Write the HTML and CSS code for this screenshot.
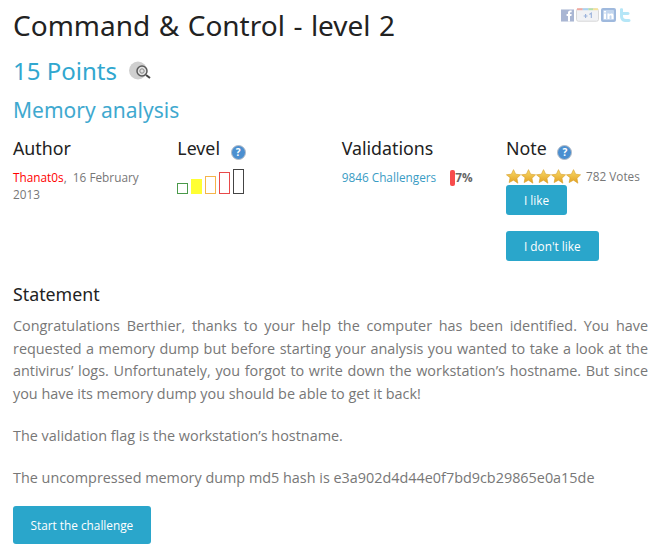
FILE: index.html
```html
<!doctype html>
<html lang="en">
    <head>
        <meta charset="utf-8" />
        <title>Command &amp; Control - level 2</title>
        <link rel="stylesheet" href="styles.css">
    </head>

    <body>
        <div class="wrap-container">
            <div class="titleRow">
                <h1>Command &amp; Control - level 2</h1>
                <div class="social">
                    <svg width="13" height="13" viewBox="0 0 14 13"><rect width="14" height="13" fill="#a9b6d3"/><path d="M7.500 13V7H6V5h1.500V3.500C7.500 2 8.500 1 10 1h1.500v2H10.500c-.5 0-.8.3-.8.8V5h1.800l-.3 2H9.700v6z" fill="#fff"/></svg>
                    <svg width="23" height="14" viewBox="0 0 24 14"><rect x=".5" y=".5" width="23" height="13" rx="2" fill="#f1f2f5" stroke="#d6d6d6"/><rect x="1" y="0" width="6" height="2" fill="#f2a9a0"/><rect x="7" y="0" width="6" height="2" fill="#a9d3f2"/><rect x="13" y="0" width="5" height="2" fill="#b5e0a8"/><rect x="18" y="0" width="5" height="2" fill="#f7e39a"/><path d="M8 8h4M10 6v4" stroke="#9db4dc" stroke-width="1.200"/><path d="M14 6.500l2-1.500v5" stroke="#9db4dc" stroke-width="1.200" fill="none"/></svg>
                    <svg width="15" height="14" viewBox="0 0 15 14"><rect width="15" height="14" rx="2" fill="#9fb9dd"/><rect x="2" y="2" width="11" height="10" rx="1" fill="#c3d6ee"/><rect x="3" y="5.500" width="2" height="5.500" fill="#fff"/><rect x="3" y="3" width="2" height="1.500" fill="#fff"/><path d="M6.500 11V5.500h2V6.500c1-1.500 4-1.500 4 1V11h-2V8c0-1-1.700-1-2 0v3z" fill="#fff"/></svg>
                    <svg class="tw" width="13" height="14" viewBox="0 0 13 14"><path d="M1 1c0-1 3-1 3 0v3h5c2 0 2 3 0 3H4v1c0 2 1 3 3 3h3c2 0 2 3 0 3H6C3 14 1 11 1 8z" fill="#b5e6f7"/></svg>
                </div>
            </div>

            <div class="pointsRow">
                <h2>15 Points</h2>
                <svg class="badge" width="22" height="22" viewBox="0 0 22 22">
                    <circle cx="9" cy="10.500" r="9" fill="#cfcfcf"/>
                    <circle cx="13" cy="11" r="5" fill="#e2e2e2" stroke="#5a5a5a" stroke-width="1.500"/>
                    <circle cx="13" cy="11" r="2.200" fill="none" stroke="#888"/>
                    <path d="M17 15l4 3" stroke="#444" stroke-width="2"/>
                </svg>
            </div>

            <h3>Memory analysis</h3>

            <div class="infoGrid">
                <div class="infoCol">
                    <h4>Author</h4>
                    <p class="small"><span class="author">Thanat0s</span><span>,&nbsp; 16 February</span><br><span>2013</span></p>
                </div>
                <div class="infoCol">
                    <h4>Level <span class="help">?</span></h4>
                    <div class="levels">
                        <span class="lvl lvl1"></span>
                        <span class="lvl lvl2"></span>
                        <span class="lvl lvl3"></span>
                        <span class="lvl lvl4"></span>
                        <span class="lvl lvl5"></span>
                    </div>
                </div>
                <div>
                    <h4>Validations</h4>
                    <div class="small valRow">
                        <span class="link">9846 Challengers</span>
                        <span class="bar"></span><b class="pct">7%</b>
                    </div>
                </div>
                <div>
                    <h4>Note <span class="help">?</span></h4>
                    <div class="small voteRow">
                        <span class="stars">
                            <svg width="15" height="15" viewBox="0 0 24 24">
                                <defs>
                                    <linearGradient id="gold" x1="0" y1="0" x2="0" y2="1">
                                        <stop offset="0" stop-color="#f9dc6a"/>
                                        <stop offset="1" stop-color="#e2a021"/>
                                    </linearGradient>
                                </defs>
                                <path class="star" d="M12 1l3.400 7.300 7.900 1-5.800 5.500 1.500 7.900L12 17.800l-7 3.900 1.500-7.900L.7 9.300l7.900-1z"/>
                            </svg>
                            <svg width="15" height="15" viewBox="0 0 24 24"><path class="star" d="M12 1l3.400 7.300 7.900 1-5.800 5.500 1.500 7.900L12 17.800l-7 3.900 1.500-7.900L.7 9.300l7.900-1z"/></svg>
                            <svg width="15" height="15" viewBox="0 0 24 24"><path class="star" d="M12 1l3.400 7.300 7.900 1-5.800 5.500 1.500 7.900L12 17.800l-7 3.900 1.500-7.900L.7 9.300l7.900-1z"/></svg>
                            <svg width="15" height="15" viewBox="0 0 24 24"><path class="star" d="M12 1l3.400 7.300 7.900 1-5.800 5.500 1.500 7.900L12 17.800l-7 3.900 1.500-7.900L.7 9.300l7.900-1z"/></svg>
                            <svg width="15" height="15" viewBox="0 0 24 24"><path class="star" d="M12 1l3.400 7.300 7.900 1-5.800 5.500 1.500 7.900L12 17.800l-7 3.900 1.500-7.900L.7 9.300l7.900-1z"/></svg>
                        </span>
                        <span>782 Votes</span>
                    </div>
                    <a class="btn btn-small">I like</a>
                    <a class="btn btn-small">I don't like</a>
                </div>
            </div>

            <h4 class="statementTitle">Statement</h4>
            <p class="statement">Congratulations Berthier, thanks to your help the computer has been identified. You have requested a memory dump but before starting your analysis you wanted to take a look at the antivirus’ logs. Unfortunately, you forgot to write down the workstation’s hostname. But since you have its memory dump you should be able to get it back!</p>
            <p class="statement">The validation flag is the workstation’s hostname.</p>
            <p class="statement lastLine">The uncompressed memory dump md5 hash is e3a902d4d44e0f7bd9cb29865e0a15de</p>

            <a class="btn btn-start">Start the challenge</a>
        </div>
    </body>
</html>
```

FILE: styles.css
```css
body {
    margin: 0;
    background-color: white;
    font-family: "Open Sans", sans-serif;
    color: #777;
}
.wrap-container {
    padding: 0 6px 0 13px;
}
.titleRow {
    display: flex;
    justify-content: space-between;
    padding-top: 6px;
}
h1, h2, h3, h4 {
    margin: 0;
    font-family: "Noto Sans", sans-serif;
    font-weight: normal;
}
h1 {
    font-size: 28px;
    line-height: 38px;
    word-spacing: 1.200px;
    color: #222;
}
.social {
    display: flex;
    align-items: center;
    gap: 2px;
    height: 14px;
    padding: 2px 16px 0 0;
}
.tw {
    margin-left: 1px;
}
.pointsRow {
    display: flex;
    align-items: center;
    gap: 12px;
    margin-top: 10px;
}
h2 {
    font-size: 24px;
    line-height: 34px;
    color: #31a7cf;
}
h3 {
    font-size: 21px;
    line-height: 30px;
    margin-top: 7px;
    color: #3fa9cf;
}
h4 {
    font-size: 17.800px;
    line-height: 26px;
    color: #222;
}
.infoGrid {
    display: grid;
    grid-template-columns: repeat(4, 164.330px);
    margin-top: 10px;
    height: 146px;
}
.infoCol {
    padding-right: 24px;
}
.small {
    font-size: 11.800px;
    line-height: 17px;
    margin: 8px 0 0;
}
.author {
    color: #f00;
}
.help {
    display: inline-block;
    width: 13px;
    height: 13px;
    margin-left: 6px;
    border-radius: 50%;
    background-color: #4b8fd0;
    border: 1px solid #b5bcc6;
    color: white;
    font-size: 10px;
    font-weight: bold;
    line-height: 13px;
    text-align: center;
    vertical-align: -1px;
}
.levels {
    display: flex;
    align-items: flex-end;
    gap: 3px;
    margin-top: 8px;
    height: 25px;
}
.lvl {
    display: block;
    width: 11px;
    box-sizing: border-box;
    border: 1px solid;
}
.lvl1 { height: 11px; border-color: #4a9a4a; }
.lvl2 { height: 15px; background-color: #ffff33; border-color: #ffff33; }
.lvl3 { height: 18px; border-color: #f5b54a; }
.lvl4 { height: 22px; border-color: #e84a4a; }
.lvl5 { height: 25px; border-color: #444; }
.valRow {
    display: flex;
    align-items: center;
}
.link {
    color: #3a9cc4;
    margin-right: 14px;
}
.bar {
    width: 5px;
    height: 16px;
    border-radius: 2px;
    background-color: #f84c4c;
}
.pct {
    color: #666;
}
.voteRow {
    display: flex;
    align-items: center;
    gap: 5px;
    margin-top: 7px;
}
.stars {
    display: flex;
}
.star {
    fill: url(#gold);
    stroke: #d9a02a;
}
.btn {
    display: block;
    width: fit-content;
    background-color: #2aa6cb;
    color: white;
    border-radius: 3px;
    font-size: 11.800px;
}
.btn-small {
    padding: 0 18px;
    line-height: 30px;
    margin-bottom: 16px;
}
.statementTitle {
    margin-bottom: 8px;
}
.statement {
    font-size: 14.400px;
    line-height: 22.700px;
    margin: 0 0 19px;
    text-align: justify;
}
.lastLine {
    margin-bottom: 17px;
}
.btn-start {
    padding: 0 17.500px;
    line-height: 38px;
}
```
